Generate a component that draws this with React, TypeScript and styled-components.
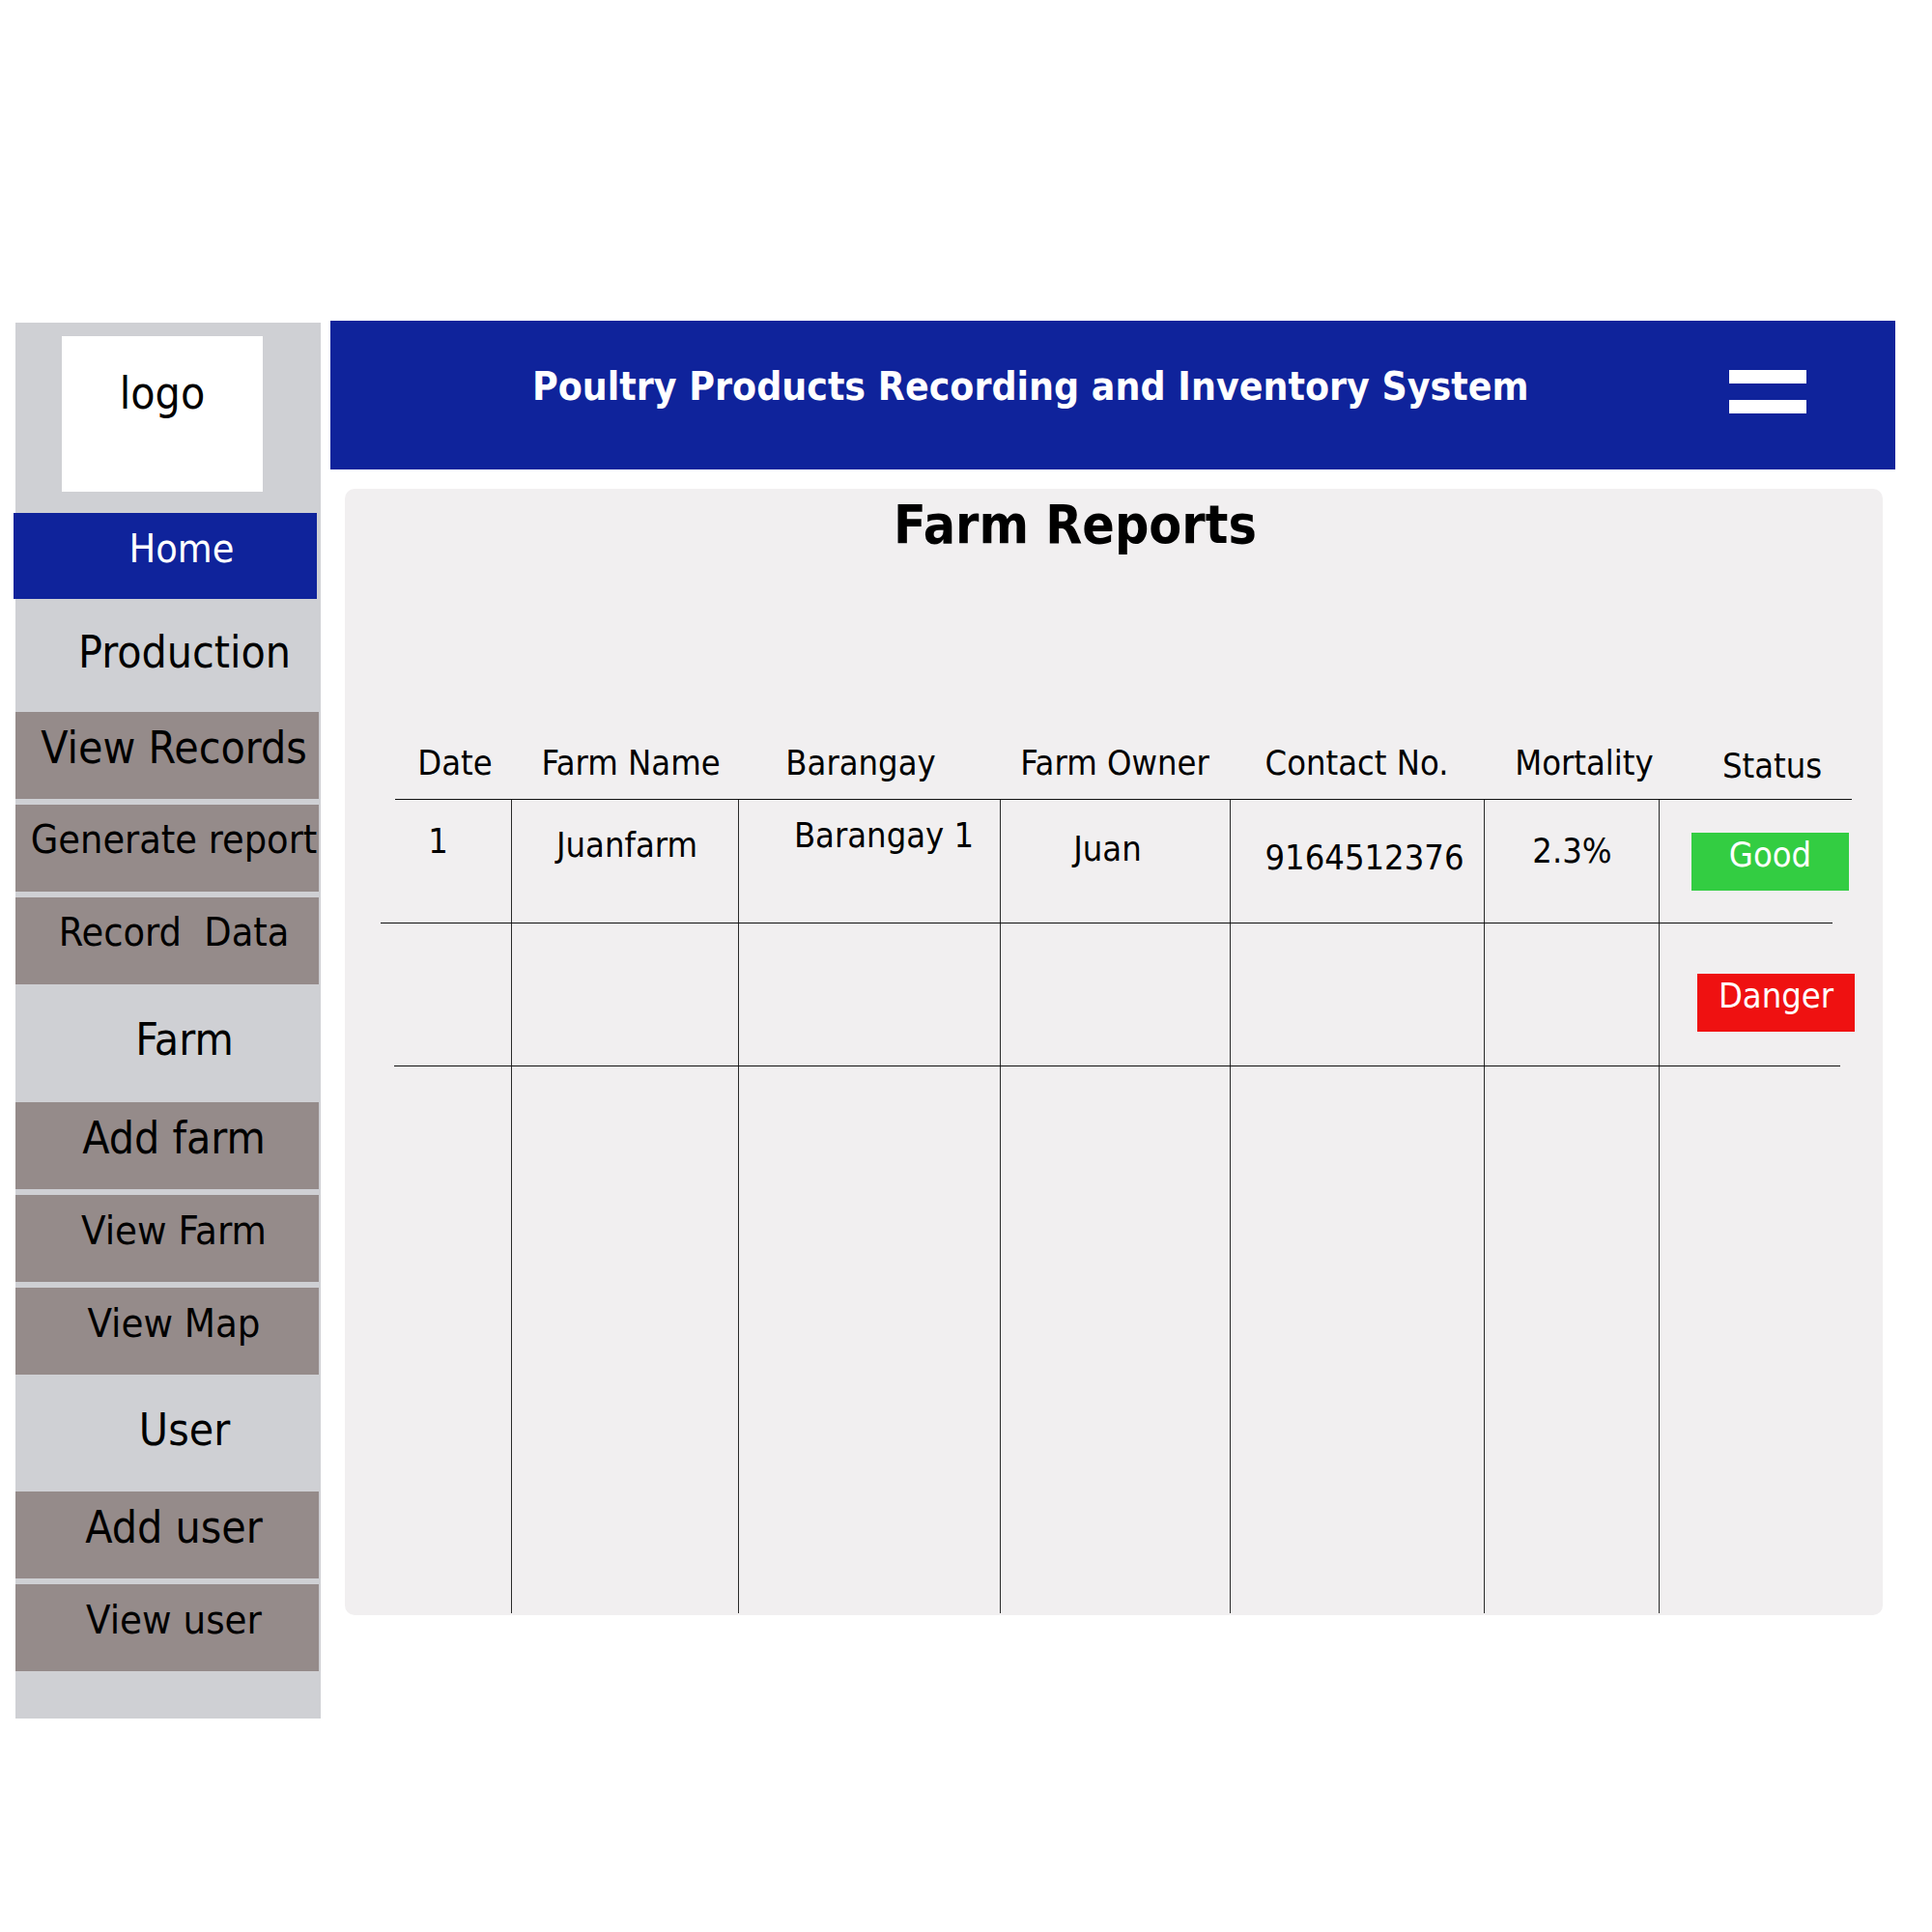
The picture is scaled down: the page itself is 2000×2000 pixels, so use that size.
import React from "react";
import styled, { createGlobalStyle } from "styled-components";

const Global = createGlobalStyle`
  html, body { margin: 0; padding: 0; background: #ffffff; }
  body {
    font-family: "DejaVu Sans Condensed", "DejaVu Sans", sans-serif;
    font-stretch: condensed;
    color: #000;
  }
`;

const BLUE = "#0f239b";
const COLS = "120px 235px 271px 238px 263px 181px 200px";

const Page = styled.div`
  width: 2000px;
  height: 2000px;
  box-sizing: border-box;
  padding-top: 332px;
  display: flex;
  align-items: flex-start;
`;

/* ---------- sidebar ---------- */
const Sidebar = styled.nav`
  margin-left: 16px;
  margin-top: 2px;
  width: 316px;
  background: #cfd0d4;
  display: flex;
  flex-direction: column;
  padding-bottom: 49px;
`;

const LogoBox = styled.div`
  margin: 14px 0 0 48px;
  width: 208px;
  height: 161px;
  box-sizing: border-box;
  background: #ffffff;
  padding-top: 36px;
  text-align: center;
  font-size: 46px;
  line-height: 46px;
`;

const HomeItem = styled.div`
  margin: 22px 0 0 -2px;
  width: 314px;
  height: 89px;
  box-sizing: border-box;
  background: ${BLUE};
  color: #fff;
  padding: 17px 0 0 34px;
  text-align: center;
  font-size: 41px;
  line-height: 41px;
  white-space: nowrap;
`;

const Section = styled.div<{ $h: number }>`
  height: ${(p) => p.$h}px;
  box-sizing: border-box;
  display: flex;
  align-items: center;
  justify-content: center;
  padding: 0 0 8px 34px;
  font-size: 46px;
  line-height: 46px;
`;

const Group = styled.div`
  display: flex;
  flex-direction: column;
  gap: 6px;
`;

const NavItem = styled.div<{ $size: number }>`
  width: 314px;
  height: 90px;
  box-sizing: border-box;
  background: #958b8a;
  padding: ${(p) => (p.$size < 45 ? 16 : 14)}px 0 0 14px;
  text-align: center;
  font-size: ${(p) => p.$size}px;
  line-height: ${(p) => p.$size}px;
  white-space: pre;
`;

/* ---------- main ---------- */
const Main = styled.main`
  margin-left: 10px;
  width: 1620px;
  display: flex;
  flex-direction: column;
`;

const Header = styled.header`
  height: 154px;
  box-sizing: border-box;
  background: ${BLUE};
  display: flex;
  justify-content: space-between;
  align-items: flex-start;
  padding: 48px 92px 0 209px;
`;

const AppTitle = styled.h1`
  margin: 0;
  color: #fff;
  font-size: 40.6px;
  line-height: 41px;
  font-weight: bold;
  white-space: nowrap;
`;

const Burger = styled.div`
  margin-top: 3px;
  display: flex;
  flex-direction: column;
  gap: 17px;
`;

const BurgerBar = styled.span`
  display: block;
  width: 80px;
  height: 14px;
  background: #fff;
`;

const Card = styled.section`
  margin: 20px 13px 0 15px;
  height: 1166px;
  box-sizing: border-box;
  background: #f1eff0;
  border-radius: 10px;
  padding: 10px 0 2px 52px;
  display: flex;
  flex-direction: column;
`;

const CardTitle = styled.h2`
  margin: 0;
  padding-right: 132px;
  text-align: center;
  font-size: 55px;
  line-height: 55px;
  font-weight: bold;
`;

const HeadRow = styled.div`
  margin-top: 201px;
  height: 55px;
  display: grid;
  grid-template-columns: ${COLS};
  align-items: start;
`;

const shift = (dx: number) =>
  dx >= 0 ? `padding-left: ${dx * 2}px;` : `padding-right: ${-dx * 2}px;`;

const HeadCell = styled.div<{ $dx?: number; $top?: number }>`
  box-sizing: border-box;
  text-align: center;
  font-size: 36px;
  line-height: 36px;
  white-space: nowrap;
  padding-top: ${(p) => p.$top ?? 0}px;
  ${(p) => shift(p.$dx ?? 0)}
`;

const Rule = styled.div<{ $left?: number; $right?: number }>`
  height: 1px;
  background: #111;
  margin-left: ${(p) => p.$left ?? 0}px;
  margin-right: ${(p) => p.$right ?? 0}px;
  width: calc(1508px - ${(p) => (p.$left ?? 0) + (p.$right ?? 0)}px);
`;

const Body = styled.div`
  flex: 1;
  display: flex;
  flex-direction: column;
`;

const Row = styled.div<{ $h?: number }>`
  display: grid;
  grid-template-columns: ${COLS};
  ${(p) => (p.$h ? `height: ${p.$h}px;` : "flex: 1;")}
`;

const Cell = styled.div<{ $top?: number; $dx?: number; $left?: number }>`
  box-sizing: border-box;
  border-left: 1px solid #2a2a2a;
  &:first-child { border-left: none; }
  display: flex;
  align-items: flex-start;
  justify-content: ${(p) => (p.$left !== undefined ? "flex-start" : "center")};
  padding-top: ${(p) => p.$top ?? 0}px;
  ${(p) => (p.$left !== undefined ? `padding-left: ${p.$left}px;` : shift(p.$dx ?? 0))}
  font-size: 36px;
  line-height: 36px;
  white-space: nowrap;
`;

const Badge = styled.span<{ $tone: "good" | "danger" }>`
  flex-shrink: 0;
  width: 163px;
  height: 60px;
  box-sizing: border-box;
  padding-top: 5px;
  text-align: center;
  color: #fff;
  font-size: 36px;
  line-height: 36px;
  background: ${(p) => (p.$tone === "good" ? "#33cd42" : "#ef1111")};
`;

const headers: { label: string; dx: number; top?: number }[] = [
  { label: "Date", dx: 2 },
  { label: "Farm Name", dx: 6.5 },
  { label: "Barangay", dx: -8.5 },
  { label: "Farm Owner", dx: 0 },
  { label: "Contact No.", dx: 0 },
  { label: "Mortality", dx: 13.5 },
  { label: "Status", dx: 17.5, top: 3 },
];

export default function App() {
  return (
    <>
      <Global />
      <Page>
        <Sidebar>
          <LogoBox>logo</LogoBox>
          <HomeItem>Home</HomeItem>
          <Section $h={117}>Production</Section>
          <Group>
            <NavItem $size={46}>View Records</NavItem>
            <NavItem $size={41}>Generate report</NavItem>
            <NavItem $size={41}>{"Record  Data"}</NavItem>
          </Group>
          <Section $h={122}>Farm</Section>
          <Group>
            <NavItem $size={46}>Add farm</NavItem>
            <NavItem $size={41.5}>View Farm</NavItem>
            <NavItem $size={41.5}>View Map</NavItem>
          </Group>
          <Section $h={121}>User</Section>
          <Group>
            <NavItem $size={46}>Add user</NavItem>
            <NavItem $size={41.5}>View user</NavItem>
          </Group>
        </Sidebar>

        <Main>
          <Header>
            <AppTitle>Poultry Products Recording and Inventory System</AppTitle>
            <Burger>
              <BurgerBar />
              <BurgerBar />
            </Burger>
          </Header>

          <Card>
            <CardTitle>Farm Reports</CardTitle>
            <HeadRow>
              {headers.map((h) => (
                <HeadCell key={h.label} $dx={h.dx} $top={h.top}>
                  {h.label}
                </HeadCell>
              ))}
            </HeadRow>
            <Rule />
            <Body>
              <Row $h={127}>
                <Cell $top={25} $dx={-15.5}>1</Cell>
                <Cell $top={29} $dx={2}>Juanfarm</Cell>
                <Cell $top={19} $dx={15}>Barangay 1</Cell>
                <Cell $top={33} $dx={-8}>Juan</Cell>
                <Cell $top={42} $dx={7.5}>9164512376</Cell>
                <Cell $top={35} $dx={0.5}>2.3%</Cell>
                <Cell $top={34} $left={33}>
                  <Badge $tone="good">Good</Badge>
                </Cell>
              </Row>
              <Rule $left={-15} $right={20} />
              <Row $h={147}>
                <Cell />
                <Cell />
                <Cell />
                <Cell />
                <Cell />
                <Cell />
                <Cell $top={52} $left={39}>
                  <Badge $tone="danger">Danger</Badge>
                </Cell>
              </Row>
              <Rule $left={-1} $right={12} />
              <Row>
                <Cell />
                <Cell />
                <Cell />
                <Cell />
                <Cell />
                <Cell />
                <Cell />
              </Row>
            </Body>
          </Card>
        </Main>
      </Page>
    </>
  );
}
